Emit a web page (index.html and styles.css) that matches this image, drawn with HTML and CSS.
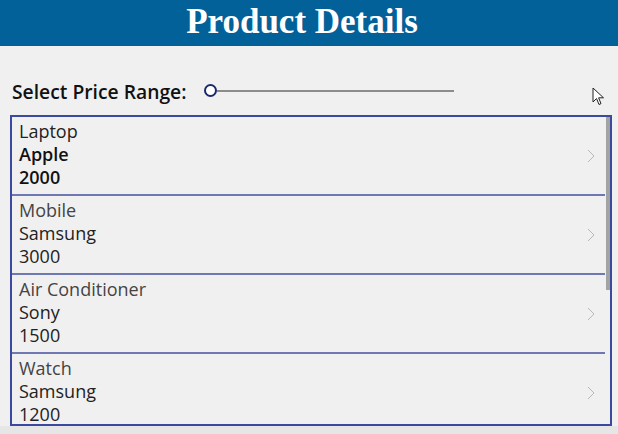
FILE: index.html
```html
<!DOCTYPE html>
<html lang="en">
<head>
    <meta charset="UTF-8">
    <meta name="viewport" content="width=device-width, initial-scale=1.0">
    <title>Product Details</title>
    <link rel="stylesheet" href="styles.css">
</head>
<body>

    <!-- Title bar -->
    <header class="title-bar">
        <h1>Product Details</h1>
    </header>

    <div class="screen">
        <!-- Price filter -->
        <div class="filter">
            <span class="filter-label">Select Price Range:</span>
            <div class="slider">
                <div class="thumb"></div>
                <div class="track"></div>
            </div>
        </div>

        <!-- Product gallery -->
        <div class="gallery">
            <div class="item selected">
                <div class="item-text">
                    <div class="name">Laptop</div>
                    <div class="brand">Apple</div>
                    <div class="price">2000</div>
                </div>
                <svg class="chevron" width="8" height="14" viewBox="0 0 8 14"><polyline points="1,1 7,7 1,13" fill="none" stroke="#b8b8b8" stroke-width="1"/></svg>
            </div>
            <div class="item">
                <div class="item-text">
                    <div class="name">Mobile</div>
                    <div class="brand">Samsung</div>
                    <div class="price">3000</div>
                </div>
                <svg class="chevron" width="8" height="14" viewBox="0 0 8 14"><polyline points="1,1 7,7 1,13" fill="none" stroke="#b8b8b8" stroke-width="1"/></svg>
            </div>
            <div class="item">
                <div class="item-text">
                    <div class="name">Air Conditioner</div>
                    <div class="brand">Sony</div>
                    <div class="price">1500</div>
                </div>
                <svg class="chevron" width="8" height="14" viewBox="0 0 8 14"><polyline points="1,1 7,7 1,13" fill="none" stroke="#b8b8b8" stroke-width="1"/></svg>
            </div>
            <div class="item">
                <div class="item-text">
                    <div class="name">Watch</div>
                    <div class="brand">Samsung</div>
                    <div class="price">1200</div>
                </div>
                <svg class="chevron" width="8" height="14" viewBox="0 0 8 14"><polyline points="1,1 7,7 1,13" fill="none" stroke="#b8b8b8" stroke-width="1"/></svg>
            </div>
            <div class="scrollbar"></div>
        </div>
    </div>

    <!-- Mouse pointer -->
    <svg class="pointer" width="14" height="20" viewBox="0 0 14 20">
        <path d="M1,1 L1,15 L4.5,11.5 L7,17.5 L9,16.6 L6.6,10.8 L11.5,10.8 Z" fill="#fff" stroke="#222" stroke-width="1"/>
    </svg>

</body>
</html>
```

FILE: styles.css
```css
body {
    margin: 0;
    font-family: "Open Sans", "Noto Sans", sans-serif;
    background-color: #e6e6e6;
    color: #222;
    position: relative;
    height: 434px;
    overflow: hidden;
}

.title-bar {
    height: 46px;
    background-color: #03619a;
    display: flex;
    align-items: center;
    justify-content: center;
    padding-right: 14px;
}

.title-bar h1 {
    margin: 0 0 2px 0;
    font-family: "Liberation Serif", "DejaVu Serif", serif;
    font-weight: bold;
    font-size: 35px;
    line-height: 40px;
    color: #fff;
}

.screen {
    background-color: #f1f0f1;
    height: 380px;
    padding: 0 6px 0 10px;
}

.filter {
    height: 69px;
    display: flex;
    align-items: center;
    padding: 0 0 0 2px;
}

.filter-label {
    font-weight: 600;
    font-size: 19.3px;
    color: #111;
    margin-top: 21px;
}

.slider {
    margin-top: 20px;
    margin-left: 18px;
    display: flex;
    align-items: center;
}

.thumb {
    width: 9px;
    height: 9px;
    border: 2px solid #1b2a6e;
    border-radius: 50%;
    background-color: #fff;
}

.track {
    width: 237px;
    height: 2px;
    background-color: #8c8c8c;
}

.gallery {
    height: 307px;
    border: 2px solid #3b4a9e;
    overflow: hidden;
    position: relative;
}

.item {
    height: 77px;
    margin-right: 5px;
    border-bottom: 2px solid #6f78b3;
    display: flex;
    align-items: center;
    justify-content: space-between;
}

.item-text {
    padding: 3px 0 5px 7px;
    align-self: flex-start;
}

.item-text div {
    font-size: 18px;
    line-height: 23px;
}

.name {
    color: #444;
}

.selected .name {
    color: #222;
}

.selected .brand,
.selected .price {
    font-weight: 600;
    color: #111;
}

.chevron {
    margin-right: 10px;
}

.scrollbar {
    position: absolute;
    top: 0;
    right: 0;
    width: 4px;
    height: 173px;
    background-color: #a3a3a3;
}

.pointer {
    position: absolute;
    left: 592px;
    top: 87px;
}
```
